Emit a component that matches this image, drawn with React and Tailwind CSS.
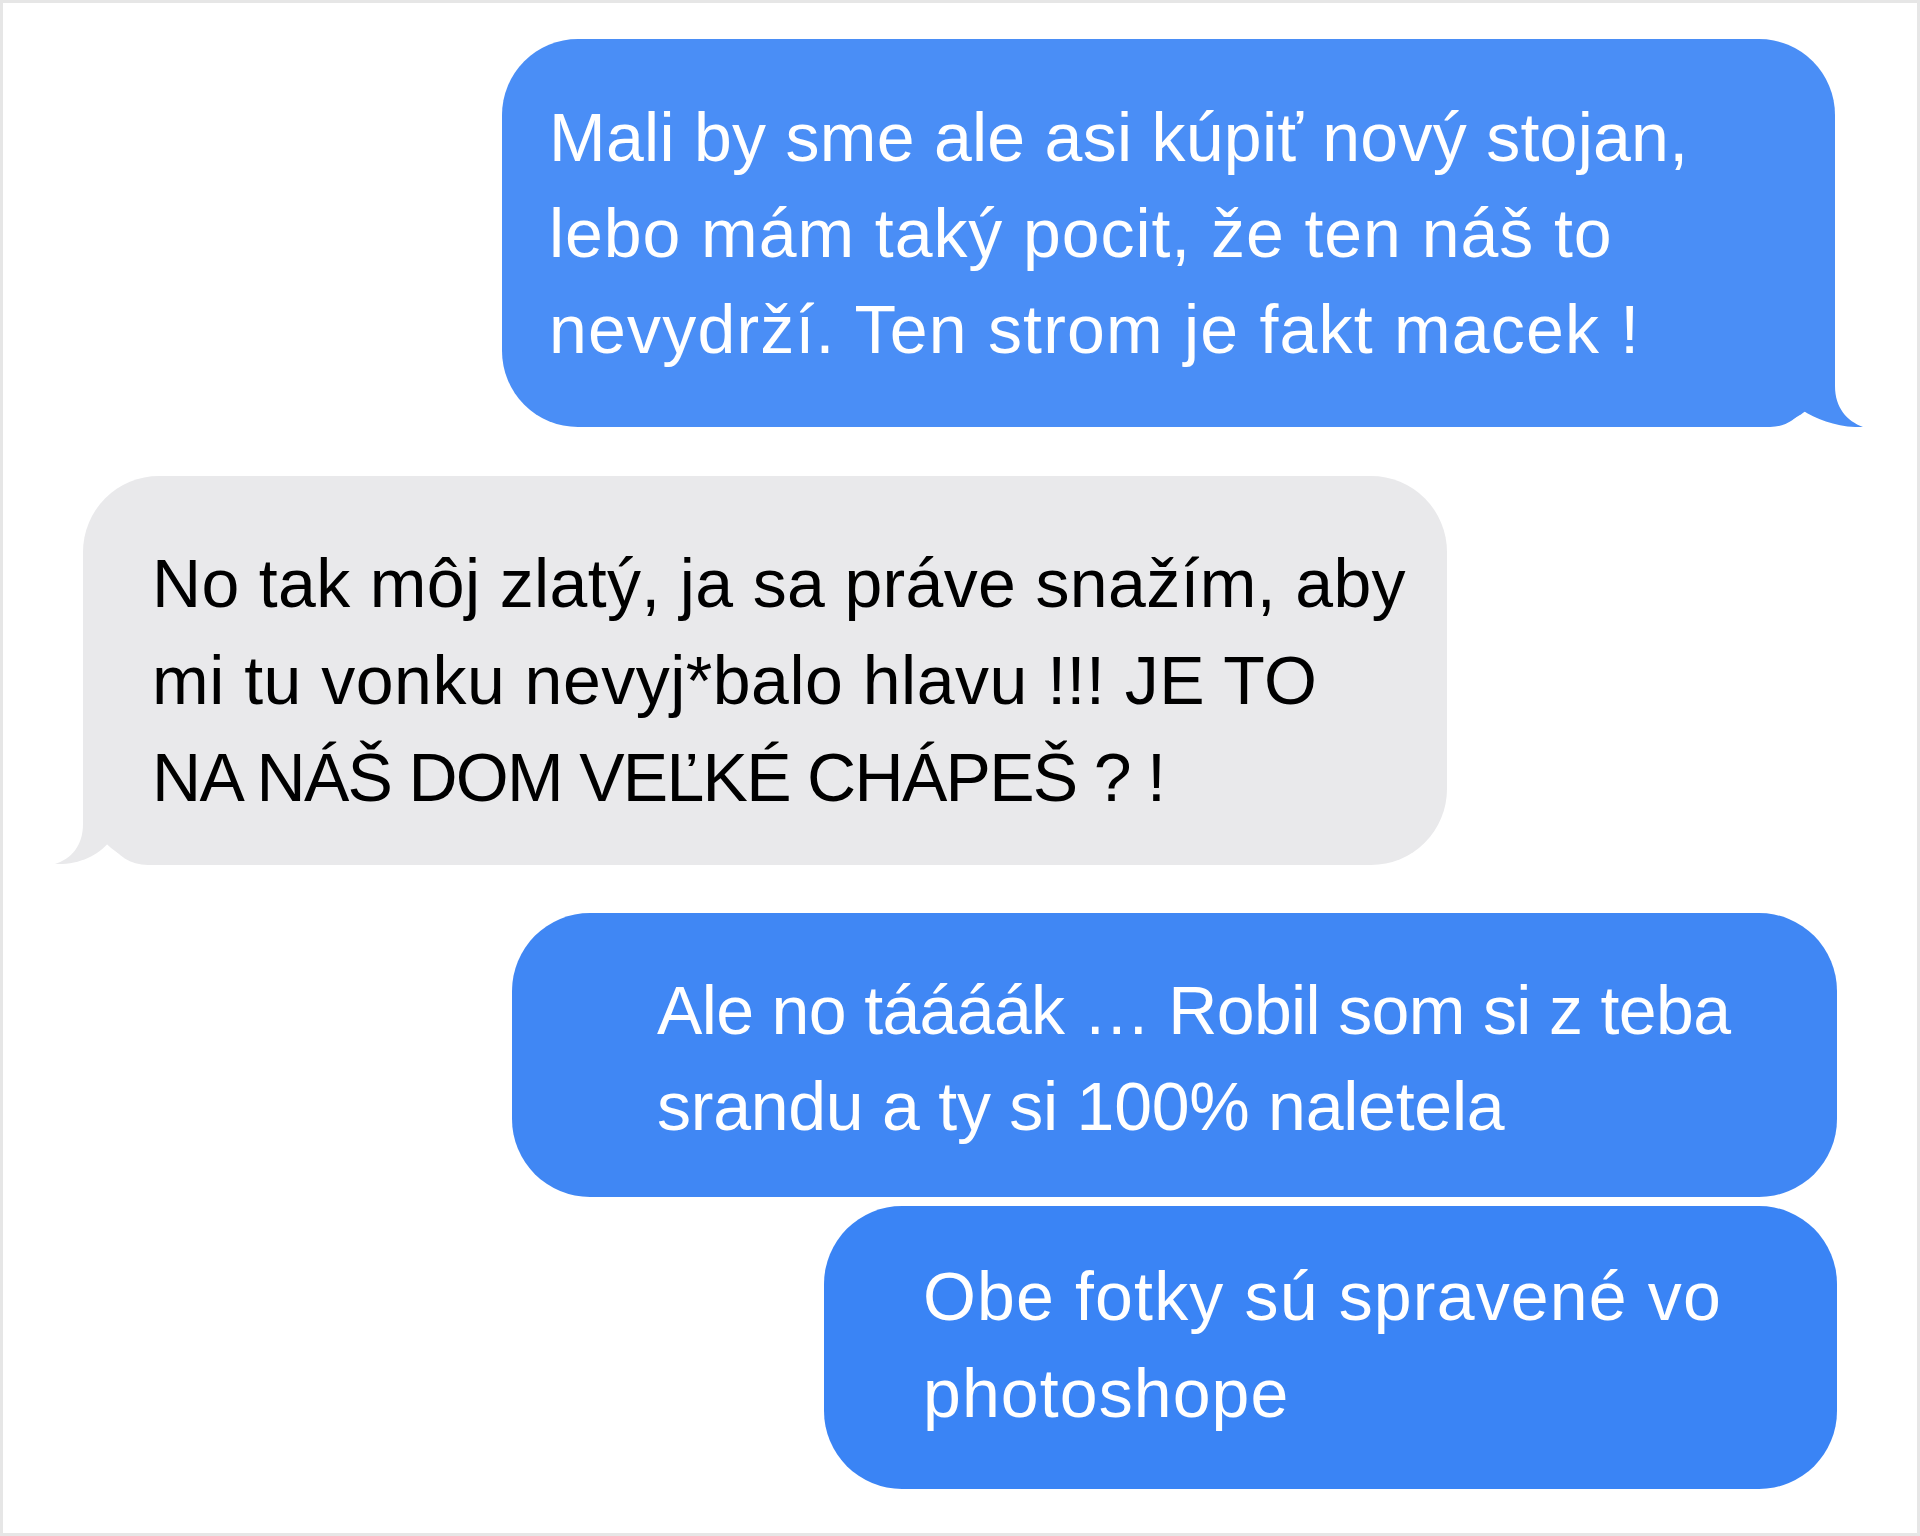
const font = { fontFamily: '"Liberation Sans", Arial, sans-serif' };

function TailRight({ color }) {
  return (
    <svg
      className="absolute right-[-30px] bottom-0 w-[110px] h-[77px]"
      viewBox="0 0 110 77"
    >
      <path
        d="M80 0 L80 36 C80 58 92 71 108 77 C85 78 62 70 47 60 C40 70 30 77 15 77 L5 77 L5 0 Z"
        fill={color}
      />
    </svg>
  );
}

function TailLeft({ color }) {
  return (
    <svg
      className="absolute left-[-30px] bottom-0 w-[110px] h-[77px]"
      viewBox="0 0 110 77"
    >
      <path
        d="M30 0 L30 36 C30 58 18 71 2 76 C25 77 45 68 56 54 C64 67 77 77 95 77 L105 77 L105 0 Z"
        fill={color}
      />
    </svg>
  );
}

function Lines({ lines, className }) {
  return (
    <div className={className}>
      {lines.map((l, i) => (
        <div key={i} className={"whitespace-nowrap " + l.cls}>
          {l.text}
        </div>
      ))}
    </div>
  );
}

export default function App() {
  return (
    <div
      className="w-[1920px] h-[1536px] bg-white border-[3px] border-[#e6e6e6] flex flex-col"
      style={font}
    >
      <div className="relative ml-[499px] mt-[36px] w-[1333px] h-[388px] rounded-[76px] bg-[#4a8ef6] pl-[47px] pt-[50px]">
        <TailRight color="#4a8ef6" />
        <Lines
          className="relative text-[68px] leading-[96px] text-white"
          lines={[
            { text: "Mali by sme ale asi kúpiť nový stojan,", cls: "tracking-[0.27px]" },
            { text: "lebo mám taký pocit, že ten náš to", cls: "tracking-[0.93px]" },
            { text: "nevydrží. Ten strom je fakt macek !", cls: "tracking-[1.2px]" },
          ]}
        />
      </div>

      <div className="relative ml-[80px] mt-[49px] w-[1364px] h-[389px] rounded-[76px] bg-[#e9e9eb] pl-[69px] pt-[59px]">
        <TailLeft color="#e9e9eb" />
        <Lines
          className="relative text-[68px] leading-[97px] text-black"
          lines={[
            { text: "No tak môj zlatý, ja sa práve snažím, aby", cls: "tracking-[0.35px]" },
            { text: "mi tu vonku nevyj*balo hlavu !!! JE TO", cls: "tracking-[0.5px]" },
            { text: "NA NÁŠ DOM VEĽKÉ CHÁPEŠ ? !", cls: "tracking-[-1.7px]" },
          ]}
        />
      </div>

      <div className="ml-[509px] mt-[48px] w-[1325px] h-[284px] rounded-[78px] bg-[#4087f4] pl-[145px] pt-[49px]">
        <Lines
          className="text-[68px] leading-[96px] text-white"
          lines={[
            { text: "Ale no táááák … Robil som si z teba", cls: "tracking-[-0.65px]" },
            { text: "srandu a ty si 100% naletela", cls: "tracking-[-0.25px]" },
          ]}
        />
      </div>

      <div className="ml-[821px] mt-[9px] w-[1013px] h-[283px] rounded-[78px] bg-[#3a84f5] pl-[99px] pt-[42px]">
        <Lines
          className="text-[68px] leading-[97px] text-white"
          lines={[
            { text: "Obe fotky sú spravené vo", cls: "tracking-[1.16px]" },
            { text: "photoshope", cls: "tracking-[1.1px]" },
          ]}
        />
      </div>
    </div>
  );
}
